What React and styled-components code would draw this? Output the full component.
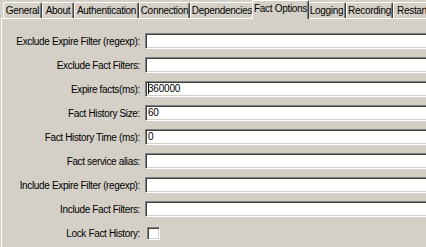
import React from "react";
import styled, { createGlobalStyle } from "styled-components";

const Global = createGlobalStyle`
  html, body { margin: 0; padding: 0; background: #d4d0c8; overflow: hidden; width: 426px; height: 247px; }
  * { box-sizing: border-box; }
`;

const Window = styled.div`
  width: 460px;
  height: 247px;
  padding-left: 1px;
  font-family: "Liberation Sans", Arial, sans-serif;
  font-size: 10px;
  color: #000;
  background: #d4d0c8;
`;

const TabStrip = styled.div`
  display: flex;
  align-items: flex-end;
  height: 18px;
  padding-left: 2px;
  position: relative;
  z-index: 1;
`;

const Tab = styled.div`
  flex: none;
  width: ${(p) => p.$w}px;
  height: ${(p) => (p.$active ? 19 : 16)}px;
  margin: ${(p) => (p.$active ? "0 -2px -1px -2px" : "0")};
  background: #d4d0c8;
  border-top: 1px solid #fff;
  border-left: 1px solid #fff;
  border-right: 1px solid #404040;
  box-shadow: inset -1px 0 #808080;
  border-radius: 2px 2px 0 0;
  display: flex;
  align-items: ${(p) => (p.$active ? "flex-start" : "center")};
  padding-top: ${(p) => (p.$active ? "2px" : "0")};
  padding-left: ${(p) => (p.$start ? "3px" : "0")};
  justify-content: ${(p) => (p.$start ? "flex-start" : "center")};
  white-space: nowrap;
  overflow: hidden;
  letter-spacing: -0.3px;
  position: relative;
  z-index: ${(p) => (p.$active ? 2 : 1)};
`;

const Panel = styled.div`
  border-top: 1px solid #fff;
  border-left: 1px solid #fff;
  height: 229px;
  padding-top: 10px;
  display: grid;
  grid-template-columns: 139px 1fr;
  grid-auto-rows: 24px;
  column-gap: 4px;
  align-items: center;
`;

const Label = styled.div`
  text-align: right;
  padding-right: 1px;
  white-space: nowrap;
  letter-spacing: -0.35px;
`;

const Field = styled.div`
  height: 16px;
  background: #fff;
  border-top: 1px solid #808080;
  border-left: 1px solid #808080;
  border-bottom: 1px solid #fff;
  border-right: 1px solid #fff;
  box-shadow: inset 1px 1px #404040, inset -1px -1px #d4d0c8;
  padding-left: 2px;
  line-height: 14px;
  letter-spacing: -0.2px;
  white-space: nowrap;
`;

const Caret = styled.span`
  display: inline-block;
  width: 1px;
  height: 12px;
  background: #000;
  vertical-align: -2px;
  margin-right: -1px;
`;

const Check = styled.div`
  width: 13px;
  height: 13px;
  margin-left: 2px;
  background: #fff;
  border-top: 1px solid #808080;
  border-left: 1px solid #808080;
  border-bottom: 1px solid #fff;
  border-right: 1px solid #fff;
  box-shadow: inset 1px 1px #404040, inset -1px -1px #d4d0c8;
`;

const tabs = [
  ["General", 39],
  ["About", 32],
  ["Authentication", 65],
  ["Connection", 51],
  ["Dependencies", 64],
  ["Fact Options", 53, true],
  ["Logging", 39],
  ["Recording", 47],
  ["Restart", 50, false, true],
];

const rows = [
  ["Exclude Expire Filter (regexp):", ""],
  ["Exclude Fact Filters:", ""],
  ["Expire facts(ms):", "360000", true],
  ["Fact History Size:", "60"],
  ["Fact History Time (ms):", "0"],
  ["Fact service alias:", ""],
  ["Include Expire Filter (regexp):", ""],
  ["Include Fact Filters:", ""],
];

export default function App() {
  return (
    <Window>
      <Global />
      <TabStrip>
        {tabs.map(([t, w, a, s]) => (
          <Tab key={t} $w={a ? w + 4 : w} $active={a} $start={s}>
            {t}
          </Tab>
        ))}
      </TabStrip>
      <Panel>
        {rows.map(([l, v, caret]) => (
          <React.Fragment key={l}>
            <Label>{l}</Label>
            <Field>
              {caret && <Caret />}
              {v}
            </Field>
          </React.Fragment>
        ))}
        <Label>Lock Fact History:</Label>
        <div>
          <Check />
        </div>
      </Panel>
    </Window>
  );
}
